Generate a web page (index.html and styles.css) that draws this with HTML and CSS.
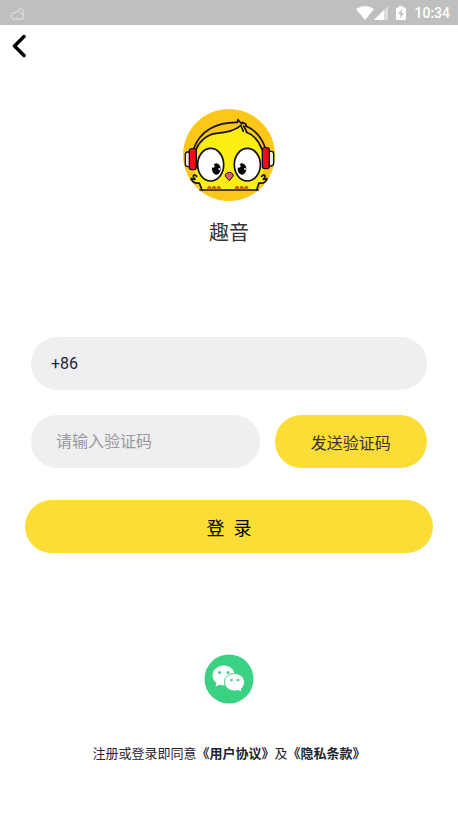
FILE: index.html
```html
<!DOCTYPE html>
<html lang="zh-CN">
<head>
    <meta charset="UTF-8">
    <meta name="viewport" content="width=device-width, initial-scale=1.0">
    <title>趣音</title>
    <link rel="stylesheet" href="styles.css">
</head>
<body>

<div class="status-bar">
    <svg class="status-weather" width="18" height="16" viewBox="0 0 18 16" fill="none" stroke="#e6e6e6">
        <path d="M5 14h8a2.500 2.500 0 0 0 .5-5a3.500 3.500 0 0 0-6.500-1a3 3 0 0 0-2 6z"/>
        <path d="M10 5.500a3 3 0 1 1 4.500 3.500M10 2.500l.5.5M16 2.500l-.5.5"/>
    </svg>
    <div class="status-icons">
        <svg width="18" height="14" viewBox="0 0 18 14" fill="#fff">
            <path d="M9 14L0 3Q9-3 18 3z"/>
        </svg>
        <svg width="14" height="14" viewBox="0 0 14 14">
            <path d="M14 0v14H0z" fill="#dcdcdc"/>
            <path d="M10 4v10H0z" fill="#fff"/>
        </svg>
        <svg class="status-battery" width="10" height="14" viewBox="0 0 10 14">
            <path d="M3 0h4v1.500h2q1 0 1 1V13q0 1-1 1H1q-1 0-1-1V2.500q0-1 1-1h2z" fill="#fff"/>
            <path d="M6 3L2 8h2.500L4 12.500L8 7H5.500z" fill="#bfbfbf"/>
        </svg>
        <span class="status-time">10:34</span>
    </div>
</div>

<header class="nav">
    <button type="button" class="back-btn" aria-label="返回">
        <svg width="14" height="24" viewBox="0 0 14 24" fill="none" stroke="#000" stroke-width="3.500" stroke-linecap="round" stroke-linejoin="round">
            <path d="M12 2.500L2.500 12L12 21.500"/>
        </svg>
    </button>
</header>

<main class="login">
    <div class="brand">
        <svg class="avatar" viewBox="27 27 276 276">
            <circle cx="165" cy="165" r="138" fill="#fcc716"/>
            <!-- body -->
            <path d="M84 270L76 249C64 251 55 246 51 236L63 238C53 226 60 221 68 229C60 211 61 190 66 168C78 127 101 103 127 100C159 98 184 91 200 77L217 97C248 112 264 145 268 188C270 206 268 218 263 229C271 221 278 226 268 238L279 236C276 246 267 251 255 249L248 270Z" fill="#fbee13"/>
            <g fill="none" stroke="#111" stroke-width="5" stroke-linejoin="round" stroke-linecap="round">
                <path d="M84 270L76 249C64 251 55 246 51 236L63 238C53 226 60 221 68 229"/>
                <path d="M248 270L255 249C267 251 276 246 279 236L268 238C278 226 271 221 263 229"/>
                <path d="M78 270H253"/>
                <!-- headband -->
                <path d="M59 146C79 91 129 66 190 67M216 78C246 91 265 118 274 144"/>
                <path d="M66 148C77 122 101 103 127 100C159 98 184 91 200 77"/>
                <path d="M217 97C240 105 255 125 264 148"/>
                <path d="M190 67L192 59L203 72L205 67L216 73L217 79M201 78L208 94M209 78L218 95"/>
            </g>
            <!-- ear pads -->
            <g stroke="#111" stroke-width="4">
                <path d="M49 156H40Q35 156 34 163V192Q34 200 42 200H49Z" fill="#eee"/>
                <path d="M283 154H292Q299 154 299 162V190Q299 198 291 198H283Z" fill="#eee"/>
                <rect x="46" y="146" width="21" height="63" rx="7" fill="#f20d12"/>
                <rect x="265" y="143" width="21" height="63" rx="7" fill="#f20d12"/>
            </g>
            <!-- eyes -->
            <g fill="#fff" stroke="#111" stroke-width="5">
                <ellipse cx="110" cy="194" rx="39" ry="49"/>
                <ellipse cx="220" cy="194" rx="39" ry="49"/>
            </g>
            <ellipse cx="127" cy="207" rx="13" ry="17" fill="#050505"/>
            <ellipse cx="204" cy="207" rx="13" ry="17" fill="#050505"/>
            <g fill="#fff">
                <circle cx="117" cy="198" r="5"/>
                <circle cx="136" cy="207" r="3"/>
                <circle cx="195" cy="198" r="5"/>
                <circle cx="213" cy="207" r="3"/>
            </g>
            <path d="M166 217Q180 219 177 229L166 242L154 229Q152 219 166 217Z" fill="#e8596b" stroke="#111" stroke-width="3"/>
            <!-- feet -->
            <g fill="#d9651f" stroke="#9c4a14" stroke-width="2">
                <circle cx="106" cy="264" r="5"/>
                <circle cx="120" cy="264" r="5"/>
                <circle cx="134" cy="264" r="5"/>
                <circle cx="189" cy="264" r="5"/>
                <circle cx="203" cy="264" r="5"/>
                <circle cx="217" cy="264" r="5"/>
            </g>
        </svg>
        <h1>趣音</h1>
    </div>

    <form id="loginForm">
        <div class="form-row">
            <input type="tel" class="field phone" name="phone" value="+86" aria-label="手机号">
        </div>
        <div class="form-row code-row">
            <input type="text" class="field code" name="code" placeholder="请输入验证码" aria-label="验证码">
            <button type="button" class="send-btn">发送验证码</button>
        </div>
        <button type="submit" class="submit-btn">登&nbsp;&nbsp;录</button>
    </form>

    <button type="button" class="wechat-btn" aria-label="微信登录">
        <svg width="50" height="50" viewBox="0 0 50 50">
            <circle cx="25" cy="25" r="24.500" fill="#3bd182"/>
            <path d="M20 11.500C13.500 11.500 8.500 16 8.500 21.500C8.500 24.700 10 27.300 12.500 29L11.500 32.500L15.500 30.700Q18 31.500 21 31.300L31 20C29.500 15 25.500 11.500 20 11.500Z" fill="#fff"/>
            <path d="M30.500 19.500C24.800 19.500 20.500 23.300 20.500 28.200C20.500 33.100 24.800 37 30.500 37Q32.500 37 34.500 36.400L38 38.500L37.200 35C39.200 33.300 40.500 31 40.500 28.200C40.500 23.300 36.200 19.500 30.500 19.500Z" fill="#fff" stroke="#3bd182"/>
            <g fill="#3bd182">
                <circle cx="15.500" cy="18.500" r="1.500"/>
                <circle cx="24" cy="18.500" r="1.500"/>
                <circle cx="27.500" cy="26" r="1.300"/>
                <circle cx="34" cy="26" r="1.300"/>
            </g>
        </svg>
    </button>

    <p class="terms">注册或登录即同意<a href="#agreement">《用户协议》</a>及<a href="#privacy">《隐私条款》</a></p>
</main>

<script>
    document.getElementById("loginForm").addEventListener("submit", function(event) {
        event.preventDefault();
    });
</script>

</body>
</html>
```

FILE: styles.css
```css
* {
    box-sizing: border-box;
}
body {
    margin: 0;
    background-color: #fff;
    color: #333;
    font-family: Roboto, "Noto Sans CJK SC", sans-serif;
}
button, input {
    font-family: inherit;
    border: none;
    padding: 0;
}
button {
    cursor: pointer;
}
svg {
    display: block;
}
.status-bar {
    display: flex;
    justify-content: space-between;
    align-items: center;
    height: 25px;
    padding: 0 8px;
    background-color: #bfbfbf;
}
.status-icons {
    display: flex;
    align-items: center;
}
.status-battery {
    margin: 0 8px 0 8px;
}
.status-time {
    color: #fff;
    font-size: 14px;
    font-weight: 500;
    line-height: 24px;
}
.nav {
    padding: 9px 12px;
}
.back-btn {
    display: block;
    background: none;
}
.login {
    padding: 42px 25px 24px;
}
.brand {
    display: flex;
    flex-direction: column;
    align-items: center;
    margin-bottom: 89px;
}
.avatar {
    width: 92px;
    height: 92px;
}
.brand h1 {
    margin: 17px 0 0;
    font-size: 20px;
    font-weight: 400;
    line-height: 30px;
}
.form-row {
    margin: 0 6px 25px;
}
.code-row {
    display: grid;
    grid-template-columns: 3fr 2fr;
    gap: 15px;
}
.field {
    width: 100%;
    height: 53px;
    border-radius: 27px;
    background-color: #efeff1;
    color: #1f2430;
    font-size: 16px;
}
.phone {
    padding: 0 20px;
}
.code {
    padding: 0 25px;
}
.field::placeholder {
    color: #999;
}
.send-btn {
    height: 53px;
    border-radius: 27px;
    background-color: #fbdd35;
    color: #333;
    font-size: 16px;
}
.submit-btn {
    display: block;
    width: 100%;
    height: 53px;
    margin-top: 32px;
    border-radius: 27px;
    background-color: #fbdd35;
    color: #000;
    font-size: 18px;
    font-weight: 400;
}
.wechat-btn {
    display: block;
    margin: 101px auto 40px;
    border-radius: 50%;
    background: none;
}
.terms {
    margin: 0;
    color: #1f2430;
    font-size: 13px;
    line-height: 20px;
    text-align: center;
}
.terms a {
    color: inherit;
    font-weight: 700;
    text-decoration: none;
}
```
